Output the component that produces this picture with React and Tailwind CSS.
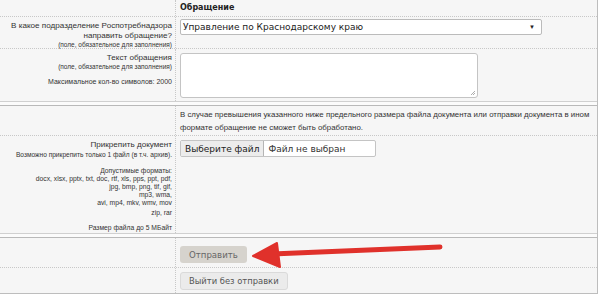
import React from 'react';

const label = "font-['Liberation_Sans',Arial,sans-serif] text-[#333]";
const ctl = "font-['DejaVu_Sans',Verdana,sans-serif]";
const cell = 'w-[176px] shrink-0 border-r border-dotted border-[#c8c8c8] pr-[3px] text-right';

function Separator() {
  return <div className="h-[5px] border-t border-b border-t-[#d0d0d0] border-b-[#b9b9b9] bg-[#fbfbfb]" />;
}

export default function App() {
  return (
    <div className="relative w-[600px] h-[295px] bg-white overflow-hidden text-[8px] leading-[10px]">
      <div className="w-[598px] h-[294px] bg-[#f6f6f6] border-r border-b border-[#bdbdbd]">
        {/* header */}
        <div className="flex h-[17px] border-b border-dotted border-[#c8c8c8]">
          <div className={cell} />
          <div className={`flex-1 pl-[4px] pt-[3px] ${ctl} text-[8px] leading-[10px] font-bold text-[#222]`}>Обращение</div>
        </div>

        {/* department */}
        <div className="flex h-[32px] border-b border-dotted border-[#c8c8c8]">
          <div className={`${cell} ${label} pt-[4px]`}>
            <div className="text-[8.1px] leading-[10px] whitespace-nowrap">В какое подразделение Роспотребнадзора</div>
            <div className="text-[8.1px] leading-[10px]">направить обращение?</div>
            <div className="text-[6.5px] leading-[7px] whitespace-nowrap">(поле, обязательное для заполнения)</div>
          </div>
          <div className="flex-1 pl-[4px] pt-[2px]">
            <div className="w-[362px] h-[16px] bg-white border border-[#bbb] rounded-[2px] flex items-center justify-between pl-[2px] pr-[6px]">
              <div className={`${ctl} text-[9px] leading-[12px] text-[#222]`}>Управление по Краснодарскому краю</div>
              <div className="text-[6px] leading-[8px] text-[#222]">▼</div>
            </div>
          </div>
        </div>

        {/* text */}
        <div className="flex h-[52px]">
          <div className={`${cell} ${label} pt-[4px]`}>
            <div className="text-[8.1px] leading-[10px]">Текст обращения</div>
            <div className="text-[6.5px] leading-[8px] whitespace-nowrap">(поле, обязательное для заполнения)</div>
            <div className="text-[7px] leading-[8px] mt-[7px] whitespace-nowrap">Максимальное кол-во символов: 2000</div>
          </div>
          <div className="flex-1 pl-[4px] pt-[4px]">
            <div className="relative w-[298px] h-[45px] bg-white border border-[#c4c4c4] rounded-[3px]">
              <svg className="absolute right-[1px] bottom-[1px]" width="6" height="6" viewBox="0 0 6 6">
                <path d="M5 1L1 5M5 3L3 5" stroke="#999" strokeWidth="0.8" />
              </svg>
            </div>
          </div>
        </div>

        <Separator />

        {/* note */}
        <div className="flex h-[30px] border-b border-dotted border-[#c8c8c8]">
          <div className={cell} />
          <div className={`flex-1 pl-[4px] pt-[2px] ${label} text-[7.85px] leading-[13px] text-[#3a3a3a]`}>
            <div className="whitespace-nowrap">
              В случае превышения указанного ниже предельного размера файла документа или отправки документа в ином
            </div>
            <div className="whitespace-nowrap">формате обращение не сможет быть обработано.</div>
          </div>
        </div>

        {/* file */}
        <div className="flex h-[97px]">
          <div className={`${cell} ${label} pt-[4px]`}>
            <div className="text-[8.1px] leading-[10px]">Прикрепить документ</div>
            <div className="text-[6.6px] leading-[9px] whitespace-nowrap">Возможно прикрепить только 1 файл (в т.ч. архив).</div>
            <div className="text-[6.75px] leading-[8px] mt-[8px] whitespace-nowrap">
              <div>Допустимые форматы:</div>
              <div>docx, xlsx, pptx, txt, doc, rtf, xls, pps, ppt, pdf,</div>
              <div>jpg, bmp, png, tif, gif,</div>
              <div>mp3, wma,</div>
              <div>avi, mp4, mkv, wmv, mov</div>
              <div className="mt-[2px]">zip, rar</div>
            </div>
            <div className="text-[6.75px] leading-[8px] mt-[7px] whitespace-nowrap">Размер файла до 5 МБайт</div>
          </div>
          <div className="flex-1 pl-[4px] pt-[4px]">
            <div className="w-[196px] h-[17px] bg-white border border-[#c4c4c4] rounded-[2px] flex items-center">
              <div className={`${ctl} h-full px-[4px] bg-[#ececec] border-r border-[#b5b5b5] text-[9px] leading-[12px] text-[#222] flex items-center`}>
                Выберите файл
              </div>
              <div className={`${ctl} pl-[4px] text-[9px] leading-[12px] text-[#333]`}>Файл не выбран</div>
            </div>
          </div>
        </div>

        <Separator />

        {/* submit */}
        <div className="flex h-[30px] border-b border-dotted border-[#c8c8c8]">
          <div className={cell} />
          <div className="flex-1 pl-[4px] pt-[8px]">
            <div className={`${ctl} inline-flex items-center h-[17px] px-[9px] bg-[#d6d3cd] rounded-[3px] text-[8.6px] leading-[12px] text-[#666]`}>
              Отправить
            </div>
          </div>
        </div>

        {/* exit */}
        <div className="flex h-[25px]">
          <div className={cell} />
          <div className="flex-1 pl-[4px] pt-[4px]">
            <div className={`${ctl} inline-flex items-center h-[18px] px-[8px] bg-[#ebebeb] border border-[#dadada] rounded-[3px] text-[8.4px] leading-[12px] text-[#555]`}>
              Выйти без отправки
            </div>
          </div>
        </div>
      </div>

      {/* red arrow */}
      <svg className="absolute left-0 top-0 pointer-events-none" width="600" height="295" viewBox="0 0 600 295">
        <path d="M440 247 L272 254" stroke="#e0312b" strokeWidth="5" strokeLinecap="round" />
        <path d="M253 256 L277 243 L280 267 Z" fill="#e0312b" stroke="#e0312b" strokeWidth="2" strokeLinejoin="round" />
      </svg>
    </div>
  );
}
